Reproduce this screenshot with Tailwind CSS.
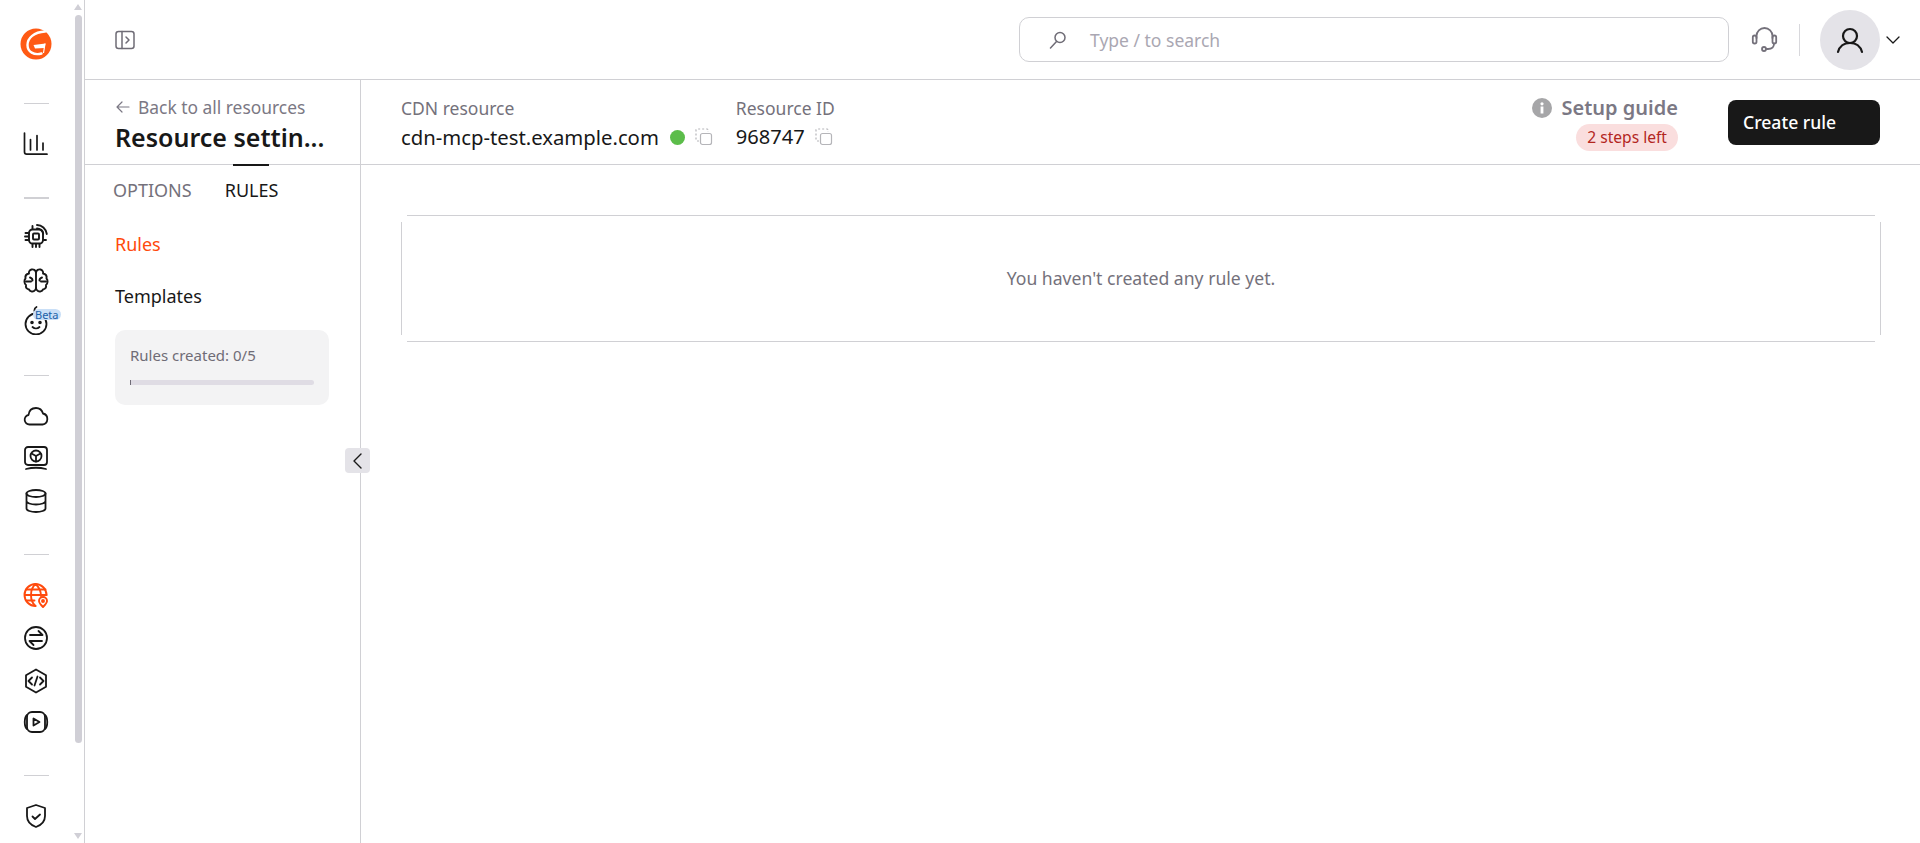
<!DOCTYPE html>
<html lang="en">
<head>
<meta charset="utf-8">
<title>Resource settings</title>
<script src="https://cdn.jsdelivr.net/npm/@tailwindcss/browser@4"></script>
</head>
<body class="bg-white">
<div class="flex h-[843px] w-[1920px] overflow-hidden bg-white font-['Noto_Sans','Open_Sans',sans-serif] text-[#181818]">

  <!-- Icon rail -->
  <aside class="flex h-full w-[85px] shrink-0 border-r border-[#d0d0d4]">
    <nav class="flex w-[72px] shrink-0 flex-col items-center pt-[28px] text-[#181818]">
      <svg class="h-[32px] w-[32px] shrink-0" viewBox="0 0 32 32" fill="none"><circle cx="16" cy="16" r="15.500" fill="#ff5a14"/><path d="M25 3.500C14 4 7.500 10 7.500 17c0 7 6.500 10.500 14 8.500" stroke="#fff" stroke-width="2.400" stroke-linecap="round"/><path d="M13.500 17 25.500 15.500 24.500 20 15 20.500Z" fill="#fff"/><path d="M25 15.500l-1.500 9.500" stroke="#fff" stroke-width="1.200"/></svg>
      <div class="mt-[43px] h-px w-[25px] shrink-0 bg-[#d0d0d4]"></div>
      <svg class="mt-[27px] h-[26px] w-[26px] shrink-0" viewBox="0 0 26 26" fill="none" stroke="currentColor" stroke-width="1.700" stroke-linecap="round"><path d="M1.500 2v19a2.200 2.200 0 0 0 2.200 2.200H24"/><path d="M7.500 8.500V19M14 4.500V19M20 12v7"/></svg>
      <div class="mt-[40px] h-[2px] w-[25px] shrink-0 bg-[#d0d0d4]"></div>
      <svg class="mt-[24px] h-[26px] w-[26px] shrink-0" viewBox="0 0 26 26" fill="none" stroke="currentColor" stroke-width="1.900" stroke-linecap="round"><rect x="6" y="6.500" width="14" height="14" rx="3.500"/><rect x="10" y="10.500" width="6" height="6" rx="1"/><path d="M2.500 10h3M2 13.500h3M2.500 17h3M9.500 21v3M13 21v3M16.500 21v3M9.500 3v3M21 17h2"/><path d="M14 2c4.800 0 9 3.800 9.800 9M14 5.500c3 0 5.700 2.500 6.200 5.500"/></svg>
      <svg class="mt-[18px] h-[26px] w-[26px] shrink-0" viewBox="0 0 26 26" fill="none" stroke="currentColor" stroke-width="1.900" stroke-linecap="round" stroke-linejoin="round"><path d="M13 5.500C12.500 3 10.500 2 8.500 2.500 6.500 3 5.500 5 6 6.500 3.500 7 2 9 2.500 11.500c-1.500 1.500-1.500 5 .5 6.500-.5 2.500 1 4 3 4.500C7 24.500 9.500 25 11 24c1.500-.5 2-1.500 2-3V5.500Z"/><path d="M13 5.500c.5-2.500 2.500-3.500 4.500-3 2 .5 3 2.500 2.500 4 2.500.5 4 2.500 3.500 5 1.500 1.500 1.500 5-.5 6.500.5 2.500-1 4-3 4.500-1 2-3.500 2.500-5 1.500-1.500-.5-2-1.500-2-3"/><path d="M7 10.500c1.500.5 2.500 1.500 2.500 3M19 10.500c-1.500.5-2.500 1.500-2.500 3M3 14.500h5M23 14.500h-5"/></svg>
      <div class="relative mt-[12px] h-[30px] w-[30px] shrink-0">
        <svg class="h-[30px] w-[30px]" viewBox="0 0 30 30" fill="none" stroke="currentColor" stroke-width="1.800" stroke-linecap="round"><circle cx="15" cy="19" r="10.500"/><path d="M15 8.500c-2-1-2.500-5 .5-6.500"/><circle cx="11" cy="17.500" r=".9" fill="currentColor"/><circle cx="19" cy="17.500" r=".9" fill="currentColor"/><path d="M11.500 22c2 1.800 5 1.800 7 0"/></svg>
        <span class="absolute left-[12px] top-[4px] rounded-full bg-[#c9dff7] px-[2px] text-[11px] leading-[11px] text-[#1c5fa8]">Beta</span>
      </div>
      <div class="mt-[40px] h-px w-[25px] shrink-0 bg-[#d0d0d4]"></div>
      <svg class="mt-[27px] h-[26px] w-[26px] shrink-0" viewBox="0 0 26 26" fill="none" stroke="currentColor" stroke-width="1.800" stroke-linejoin="round"><path d="M6.500 21.500a4.800 4.800 0 0 1-1-9.500C6 7.500 9 5 13 5c3.500 0 6 2 7 5.500a5.600 5.600 0 0 1-.5 11h-13Z"/></svg>
      <svg class="mt-[16px] h-[26px] w-[26px] shrink-0" viewBox="0 0 26 26" fill="none" stroke="currentColor" stroke-width="1.800" stroke-linecap="round" stroke-linejoin="round"><rect x="2" y="2" width="22" height="18" rx="3"/><circle cx="13" cy="11" r="5.500"/><path d="M13 11v5.500M13 11 8.500 8.500M13 11l4.500-2.500"/><path d="M3 24c6-1.500 14-1.500 20 0"/></svg>
      <svg class="mt-[17px] h-[26px] w-[26px] shrink-0" viewBox="0 0 26 26" fill="none" stroke="currentColor" stroke-width="1.800" stroke-linecap="round"><ellipse cx="13" cy="5.500" rx="9.500" ry="3.500"/><path d="M3.500 5.500v15c0 2 4.300 3.500 9.500 3.500s9.500-1.500 9.500-3.500v-15M3.500 13c0 2 4.300 3.500 9.500 3.500s9.500-1.500 9.500-3.500"/></svg>
      <div class="mt-[40px] h-px w-[25px] shrink-0 bg-[#d0d0d4]"></div>
      <svg class="mt-[27px] h-[26px] w-[26px] shrink-0" viewBox="0 0 26 26" fill="none" stroke="#ff4a0d" stroke-width="1.900" stroke-linecap="round"><path d="M12.500 24a11 11 0 1 1 11-11"/><path d="M2 13h21.500M3.500 7.500h19M3.500 18.500h8M12.500 2c-6 5-6 17 0 22M12.500 2c4 3.500 5.500 8 5.500 12"/><path d="M20 25c-2.500-2.500-4-4-4-6a4 4 0 0 1 8 0c0 2-1.500 3.500-4 6Z" fill="#fff"/><circle cx="20" cy="19" r="1" fill="#ff4a0d"/></svg>
      <svg class="mt-[17px] h-[26px] w-[26px] shrink-0" viewBox="0 0 26 26" fill="none" stroke="currentColor" stroke-width="1.800" stroke-linecap="round" stroke-linejoin="round"><circle cx="13" cy="13" r="11"/><path d="M7 10h12.500l-4-4M19 16H6.500l4 4"/></svg>
      <svg class="mt-[17px] h-[26px] w-[26px] shrink-0" viewBox="0 0 26 26" fill="none" stroke="currentColor" stroke-width="1.800" stroke-linecap="round" stroke-linejoin="round"><path d="M13 1.500 23 7.200v11.600L13 24.500 3 18.800V7.200L13 1.500Z"/><path d="m9 9.500-3.500 3.500L9 16.500M17 9.500l3.500 3.500-3.500 3.500M14.500 8.500l-3 9"/></svg>
      <svg class="mt-[15px] h-[26px] w-[26px] shrink-0" viewBox="0 0 26 26" fill="none" stroke="currentColor" stroke-width="1.800" stroke-linecap="round" stroke-linejoin="round"><rect x="4" y="3" width="18" height="20" rx="5"/><path d="M4 6C1 8.500 1 17.500 4 20M22 6c3 2.500 3 11.500 0 14"/><path d="M10.500 9.500v7l6-3.500-6-3.500Z"/></svg>
      <div class="mt-[40px] h-px w-[25px] shrink-0 bg-[#d0d0d4]"></div>
      <svg class="mt-[27px] h-[26px] w-[26px] shrink-0" viewBox="0 0 26 26" fill="none" stroke="currentColor" stroke-width="1.800" stroke-linecap="round" stroke-linejoin="round"><path d="M13 2 4 5v8c0 5 3.500 9 9 11 5.500-2 9-6 9-11V5l-9-3Z"/><path d="m9.500 13.500 2.500 2.500 5-4.500"/></svg>
    </nav>
    <!-- Scrollbar -->
    <div class="flex w-[12px] shrink-0 flex-col items-center">
      <div class="mt-[4px] h-0 w-0 border-x-[4px] border-b-[6px] border-x-transparent border-b-[#d0cfd6]"></div>
      <div class="mt-[5px] h-[728px] w-[7px] rounded-full bg-[#d0cfd6]"></div>
      <div class="mt-[90px] h-0 w-0 border-x-[4px] border-t-[6px] border-x-transparent border-t-[#d0cfd6]"></div>
    </div>
  </aside>

  <div class="flex min-w-0 flex-1 flex-col">
    <!-- Top bar -->
    <header class="flex h-[80px] shrink-0 items-center border-b border-[#d0d0d4] pl-[30px] pr-[15px]">
      <svg class="h-[20px] w-[20px] shrink-0" viewBox="0 0 20 20" fill="none" stroke="#6f6c76" stroke-width="1.500" stroke-linecap="round" stroke-linejoin="round"><rect x="1" y="1.500" width="18" height="17" rx="2.500"/><path d="M7 1.500v17M11 7l3 3-3 3"/></svg>
      <label class="ml-[884px] flex h-[45px] w-[710px] shrink-0 items-center rounded-[10px] border border-[#d0d0d4] pl-[29px]">
        <svg class="h-[18px] w-[18px] shrink-0" viewBox="0 0 18 18" fill="none" stroke="#6f6c76" stroke-width="1.500" stroke-linecap="round"><circle cx="11" cy="6.500" r="5"/><path d="M7.500 10.500 1.500 17"/></svg>
        <span class="ml-[23px] mt-[1px] text-[17.500px] text-[#aaa7b2]">Type / to search</span>
      </label>
      <svg class="ml-[22px] h-[27px] w-[27px] shrink-0" viewBox="0 0 27 27" fill="none" stroke="#74717b" stroke-width="1.800" stroke-linecap="round"><path d="M5.500 12V10a8 8 0 0 1 16 0v2"/><rect x="1.800" y="9.500" width="3.700" height="8" rx="1.800"/><rect x="21.500" y="9.500" width="3.700" height="8" rx="1.800"/><path d="M23 17.500c0 3-2 5.500-6 5.500h-2"/><circle cx="13" cy="23" r="2"/></svg>
      <div class="ml-[21px] h-[32px] w-px shrink-0 bg-[#d8d8dc]"></div>
      <div class="ml-[20px] flex h-[60px] w-[60px] shrink-0 items-center justify-center rounded-full bg-[#e4e3e8]">
        <svg class="h-[28px] w-[28px]" viewBox="0 0 28 28" fill="none" stroke="#181818" stroke-width="2.200" stroke-linecap="round"><circle cx="14" cy="10" r="7"/><path d="M2 26c1.500-5.500 6-9 12-9s10.500 3.500 12 9"/></svg>
      </div>
      <svg class="ml-[6px] h-[14px] w-[14px] shrink-0" viewBox="0 0 14 14" fill="none" stroke="#181818" stroke-width="1.300" stroke-linecap="round" stroke-linejoin="round"><path d="m1 4 6 6 6-6"/></svg>
    </header>

    <div class="flex min-h-0 flex-1">
      <!-- Left section panel -->
      <aside class="relative w-[276px] shrink-0 border-r border-[#d0d0d4]">
        <div class="flex h-[85px] flex-col border-b border-[#d0d0d4] pl-[30px] pt-[15px]">
          <div class="flex items-center text-[17.400px] leading-[24px] text-[#7b7884]">
            <svg class="ml-[1px] mr-[8px] h-[14px] w-[14px] shrink-0" viewBox="0 0 14 14" fill="none" stroke="#7b7884" stroke-width="1.200" stroke-linecap="round" stroke-linejoin="round"><path d="M13 7H1M6 2 1 7l5 5"/></svg>
            Back to all resources
          </div>
          <div class="mt-[2px] text-[25px] font-semibold leading-[32px] text-[#181818]">Resource settin...</div>
        </div>
        <div class="relative flex h-[50px] text-[18px] uppercase leading-[50px]">
          <span class="ml-[28px] text-[#74717b]">Options</span>
          <span class="relative ml-[33px] text-[#181818]">Rules<span class="absolute left-[8px] top-[-1px] h-[2px] w-[36px] bg-[#181818]"></span></span>
        </div>
        <div class="pl-[30px] text-[18px]">
          <div class="mt-[17px] leading-[24px] text-[#ff4a0d]">Rules</div>
          <div class="mt-[28px] leading-[24px] text-[#181818]">Templates</div>
          <div class="mt-[22px] h-[75px] w-[214px] rounded-[10px] bg-[#f3f3f4] px-[15px] pt-[15px]">
            <div class="text-[15px] leading-[20px] text-[#6f6c76]">Rules created: 0/5</div>
            <div class="mt-[15px] h-[5px] w-[184px] rounded-r-full bg-[#dfdce4]"><div class="h-full w-px bg-[#6f6c76]"></div></div>
          </div>
        </div>
        <button class="absolute left-[260px] top-[368px] flex h-[25px] w-[25px] items-center justify-center rounded-[4px] bg-[#e4e3e8]">
          <svg class="h-[16px] w-[11px]" viewBox="0 0 11 16" fill="none" stroke="#181818" stroke-width="1.400" stroke-linecap="round" stroke-linejoin="round"><path d="M9 1 2 8l7 7"/></svg>
        </button>
      </aside>

      <!-- Main -->
      <main class="min-w-0 flex-1">
        <div class="flex h-[85px] border-b border-[#d0d0d4] pl-[40px] pr-[40px] pt-[16px]">
          <div>
            <div class="text-[17.500px] leading-[24px] text-[#74717b]">CDN resource</div>
            <div class="mt-[1px] flex h-[32px] items-center">
              <span class="text-[20.300px] leading-[32px] text-[#181818]">cdn-mcp-test.example.com</span>
              <span class="ml-[11px] h-[15px] w-[15px] rounded-full bg-[#5cbd4a]"></span>
              <svg class="ml-[9px] h-[20px] w-[20px]" viewBox="0 0 20 20" fill="none" stroke="#b5b5b9" stroke-width="1.200"><path d="M5 14H3a1 1 0 0 1-1-1V3a1 1 0 0 1 1-1h10a1 1 0 0 1 1 1v2" stroke-dasharray="2 2"/><rect x="6.500" y="6.500" width="11" height="11" rx="2"/></svg>
            </div>
          </div>
          <div class="ml-[22px]">
            <div class="text-[17.500px] leading-[24px] text-[#74717b]">Resource ID</div>
            <div class="mt-[1px] flex h-[32px] items-center">
              <span class="text-[20.100px] leading-[32px] text-[#181818]">968747</span>
              <svg class="ml-[9px] h-[20px] w-[20px]" viewBox="0 0 20 20" fill="none" stroke="#b5b5b9" stroke-width="1.200"><path d="M5 14H3a1 1 0 0 1-1-1V3a1 1 0 0 1 1-1h10a1 1 0 0 1 1 1v2" stroke-dasharray="2 2"/><rect x="6.500" y="6.500" width="11" height="11" rx="2"/></svg>
            </div>
          </div>
          <div class="ml-auto flex flex-col items-end">
            <div class="flex items-center text-[20px] font-semibold leading-[24px] text-[#7b7884]">
              <svg class="mr-[10px] h-[20px] w-[20px]" viewBox="0 0 20 20"><circle cx="10" cy="10" r="10" fill="#a6a6a8"/><rect x="8.600" y="8.500" width="2.800" height="7" fill="#fff"/><circle cx="10" cy="5.800" r="1.600" fill="#fff"/></svg>
              Setup guide
            </div>
            <span class="mt-[4px] rounded-full bg-[#fadede] px-[11px] text-[15.600px] leading-[27px] text-[#b3261e]">2 steps left</span>
          </div>
          <button class="ml-[50px] mt-[4px] flex h-[45px] w-[152px] items-center rounded-[8px] bg-[#181818] pl-[15px] text-[17.600px] font-medium text-white">Create rule</button>
        </div>
        <div class="ml-[40px] mt-[50px] flex h-[127px] w-[1480px] flex-col justify-between">
          <div class="mx-[6px] h-px bg-[#d0d0d4]"></div>
          <div class="flex h-[113px] items-center justify-center border-x border-[#d0d0d4] text-[17.600px] text-[#74717b]">You haven't created any rule yet.</div>
          <div class="mx-[6px] h-px bg-[#d0d0d4]"></div>
        </div>
      </main>
    </div>
  </div>
</div>
</body>
</html>
